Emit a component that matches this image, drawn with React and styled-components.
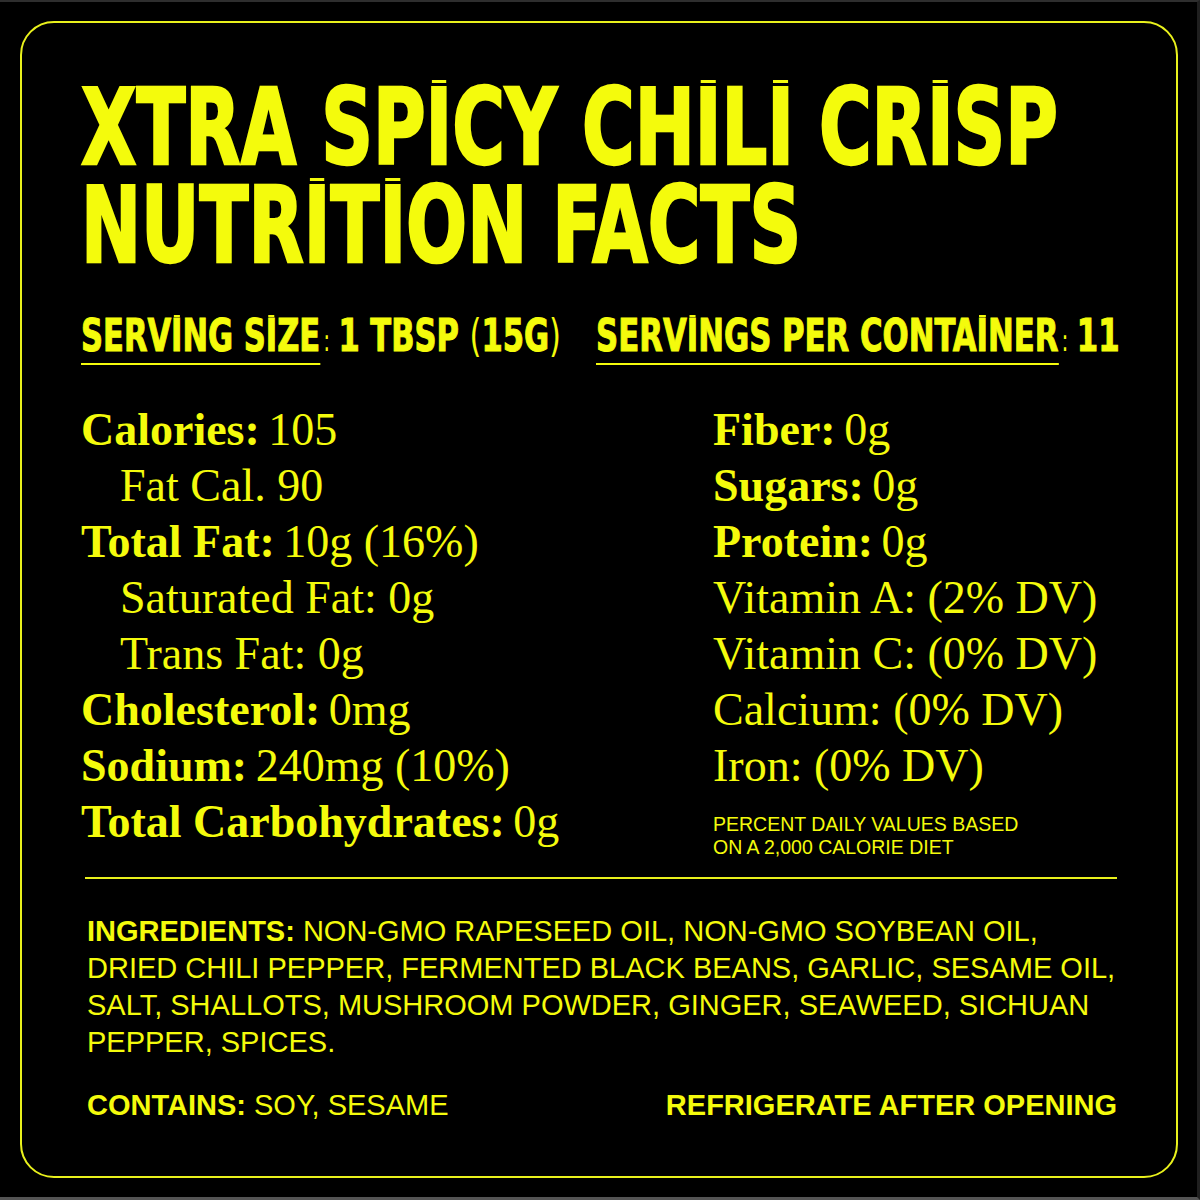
import React from "react";
import styled, { createGlobalStyle } from "styled-components";

const YELLOW = "#f4fb0c";

const Global = createGlobalStyle`
  html, body {
    margin: 0;
    padding: 0;
    background: #000;
  }
  * { box-sizing: border-box; }
`;

const Frame = styled.div`
  width: 1200px;
  height: 1200px;
  background: #000;
  border-top: 2px solid #2e2e2e;
  border-right: 3px solid #1f1f1f;
  border-bottom: 3px solid #545454;
  padding: 19px 19px 19px 20px;
`;

const Card = styled.div`
  height: 100%;
  border: 2px solid #e9f11c;
  border-radius: 34px;
  padding: 56px 59px 0 59px;
  color: ${YELLOW};
`;

const Title = styled.h1`
  margin: 0;
  font-family: "DejaVu Sans Condensed", "DejaVu Sans", sans-serif;
  font-stretch: condensed;
  font-weight: bold;
  font-size: 106px;
  line-height: 98px;
  -webkit-text-stroke: 2.5px ${YELLOW};
`;

const TitleLine = styled.div`
  white-space: nowrap;
  transform: scaleX(${(p) => p.$scale});
  transform-origin: left center;
`;

/* the label font tops its I's with a short bar */
const BarI = styled.span`
  position: relative;
  &::before {
    content: "";
    position: absolute;
    left: 0.075em;
    right: 0.075em;
    top: 0.13em;
    height: ${(p) => p.$thick || "3px"};
    background: currentColor;
  }
`;

const ServingRow = styled.div`
  display: grid;
  grid-template-columns: 515px 1fr;
  margin-top: 36px;
  font-family: "DejaVu Sans Condensed", "DejaVu Sans", sans-serif;
  font-stretch: condensed;
  font-weight: bold;
  font-size: 45px;
  line-height: 50px;
  -webkit-text-stroke: 1px ${YELLOW};
`;

const ServingItem = styled.div`
  white-space: nowrap;
  transform: scaleX(${(p) => p.$scale});
  transform-origin: left center;
`;

const Underlined = styled.span`
  display: inline-block;
  border-bottom: 2px solid ${YELLOW};
  padding-bottom: 2px;
  line-height: 50px;
`;

const Colon = styled.span`
  font-size: 30px;
  font-weight: normal;
  -webkit-text-stroke: 0;
  margin: 0 11px 0 4px;
`;

const Paren = styled.span`
  font-weight: normal;
  -webkit-text-stroke: 0;
`;

const NutrientGrid = styled.div`
  display: grid;
  grid-template-columns: 632px 1fr;
  margin-top: 36px;
  font-family: "Liberation Serif", "Times New Roman", serif;
  font-size: 46px;
  line-height: 56px;
`;

const Column = styled.div`
  display: flex;
  flex-direction: column;
`;

const Row = styled.div`
  white-space: nowrap;
  padding-left: ${(p) => (p.$indent ? "39px" : "0")};
  b {
    font-weight: bold;
    margin-right: -3px;
  }
`;

const Footnote = styled.div`
  margin-top: 19px;
  font-family: "Liberation Sans", Arial, sans-serif;
  font-size: 19.5px;
  line-height: 23px;
`;

const Divider = styled.hr`
  margin: 18px 0 0 4px;
  border: none;
  height: 2px;
  background: #e9f11c;
`;

const Lower = styled.div`
  padding-left: 6px;
  font-family: "Liberation Sans", Arial, sans-serif;
  font-size: 29px;
  line-height: 37px;
`;

const Ingredients = styled.p`
  margin: 34px 0 0 0;
`;

const FooterRow = styled.div`
  display: flex;
  justify-content: space-between;
  margin-top: 26px;
`;

const Bold = styled.span`
  font-weight: bold;
`;

const left = [
  { label: "Calories:", value: " 105" },
  { value: "Fat Cal. 90", indent: true },
  { label: "Total Fat:", value: " 10g (16%)" },
  { value: "Saturated Fat: 0g", indent: true },
  { value: "Trans Fat: 0g", indent: true },
  { label: "Cholesterol:", value: " 0mg" },
  { label: "Sodium:", value: " 240mg (10%)" },
  { label: "Total Carbohydrates:", value: " 0g" },
];

const right = [
  { label: "Fiber:", value: " 0g" },
  { label: "Sugars:", value: " 0g" },
  { label: "Protein:", value: " 0g" },
  { value: "Vitamin A: (2% DV)" },
  { value: "Vitamin C: (0% DV)" },
  { value: "Calcium: (0% DV)" },
  { value: "Iron: (0% DV)" },
];

function Nutrient({ label, value, indent }) {
  return (
    <Row $indent={indent}>
      {label && <b>{label}</b>}
      {value}
    </Row>
  );
}

// split a label on "I" and give each one its bar
function Barred({ text, thick }) {
  const parts = text.split("I");
  return parts.map((p, i) => (
    <React.Fragment key={i}>
      {p}
      {i < parts.length - 1 && <BarI $thick={thick}>I</BarI>}
    </React.Fragment>
  ));
}

export default function App() {
  return (
    <>
      <Global />
      <Frame>
        <Card>
          <Title>
            <TitleLine $scale={0.753}>
              XTRA <Barred text="SPICY CHILI CRISP" />
            </TitleLine>
            <TitleLine $scale={0.753}>
              <Barred text="NUTRITION" /> FACTS
            </TitleLine>
          </Title>

          <ServingRow>
            <ServingItem $scale={0.755}>
              <Underlined>
                <Barred text="SERVING SIZE" thick="2px" />
              </Underlined>
              <Colon>:</Colon>1 TBSP <Paren>(</Paren>15G<Paren>)</Paren>
            </ServingItem>
            <ServingItem $scale={0.76}>
              <Underlined>
                <Barred text="SERVINGS PER CONTAINER" thick="2px" />
              </Underlined>
              <Colon>:</Colon>11
            </ServingItem>
          </ServingRow>

          <NutrientGrid>
            <Column>
              {left.map((n, i) => (
                <Nutrient key={i} {...n} />
              ))}
            </Column>
            <Column>
              {right.map((n, i) => (
                <Nutrient key={i} {...n} />
              ))}
              <Footnote>
                PERCENT DAILY VALUES BASED
                <br />
                ON A 2,000 CALORIE DIET
              </Footnote>
            </Column>
          </NutrientGrid>

          <Divider />

          <Lower>
            <Ingredients>
              <Bold>INGREDIENTS:</Bold> NON-GMO RAPESEED OIL, NON-GMO SOYBEAN OIL,
              DRIED CHILI PEPPER, FERMENTED BLACK BEANS, GARLIC, SESAME OIL, SALT,
              SHALLOTS, MUSHROOM POWDER, GINGER, SEAWEED, SICHUAN PEPPER, SPICES.
            </Ingredients>
            <FooterRow>
              <span>
                <Bold>CONTAINS:</Bold> SOY, SESAME
              </span>
              <Bold>REFRIGERATE AFTER OPENING</Bold>
            </FooterRow>
          </Lower>
        </Card>
      </Frame>
    </>
  );
}
